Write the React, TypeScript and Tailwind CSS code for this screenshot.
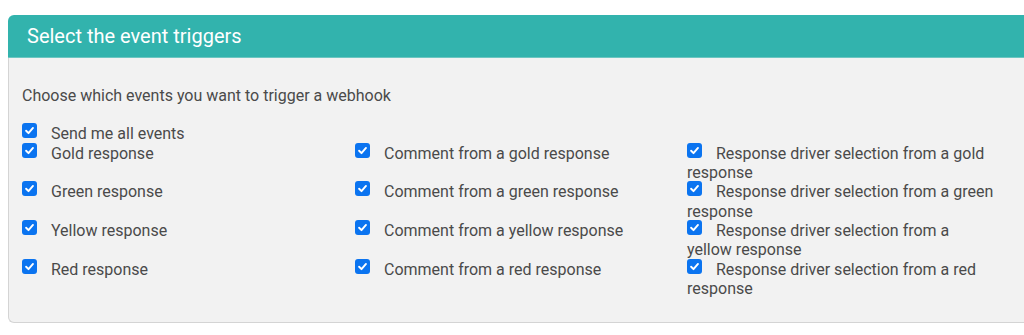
import React from "react";

const rows = [
  ["Gold response", "Comment from a gold response", "Response driver selection from a gold response"],
  ["Green response", "Comment from a green response", "Response driver selection from a green response"],
  ["Yellow response", "Comment from a yellow response", "Response driver selection from a yellow response"],
  ["Red response", "Comment from a red response", "Response driver selection from a red response"],
];

const Check = () => (
  <span className="inline-flex align-top items-center justify-center w-[15px] h-[15px] mt-[-1px] rounded-[3px] bg-[#0b74f0] mr-[14px]">
    <svg width="11" height="11" viewBox="0 0 12 12">
      <path d="M2.3 6.3 L4.9 8.9 L9.8 3.2" fill="none" stroke="white" strokeWidth="2.1" strokeLinecap="round" strokeLinejoin="round" />
    </svg>
  </span>
);

const Item = ({ label, w }: { label: string; w: string }) => (
  <div className={`${w} shrink-0`}>
    <Check />
    {label}
  </div>
);

const App = () => {
  return (
    <div className="w-[1024px] h-[335px] overflow-hidden bg-white font-['Roboto',sans-serif]">
      <div className="pt-[15px] pl-2">
        <div className="w-[1030px]">
          <div className="h-[43px] bg-[#32b3ad] rounded-tl-[6px] border-b border-[#6cc6c1] flex items-center pl-[19px] text-white text-[20px]">
            Select the event triggers
          </div>
          <div className="h-[265px] bg-[#f2f2f2] border-l border-b border-[#d4d4d4] rounded-bl-[6px] pl-[13px] pt-[28px] text-[16px] leading-[19.35px] text-[#4a4a4a]">
            <p>Choose which events you want to trigger a webhook</p>
            <div className="mt-[19px]">
              <Check />
              Send me all events
            </div>
            {rows.map((r) => (
              <div key={r[0]} className="flex h-[38.7px]">
                <Item label={r[0]} w="w-[333px]" />
                <Item label={r[1]} w="w-[332px]" />
                <Item label={r[2]} w="w-[307px]" />
              </div>
            ))}
          </div>
        </div>
      </div>
    </div>
  );
};

export default App;
